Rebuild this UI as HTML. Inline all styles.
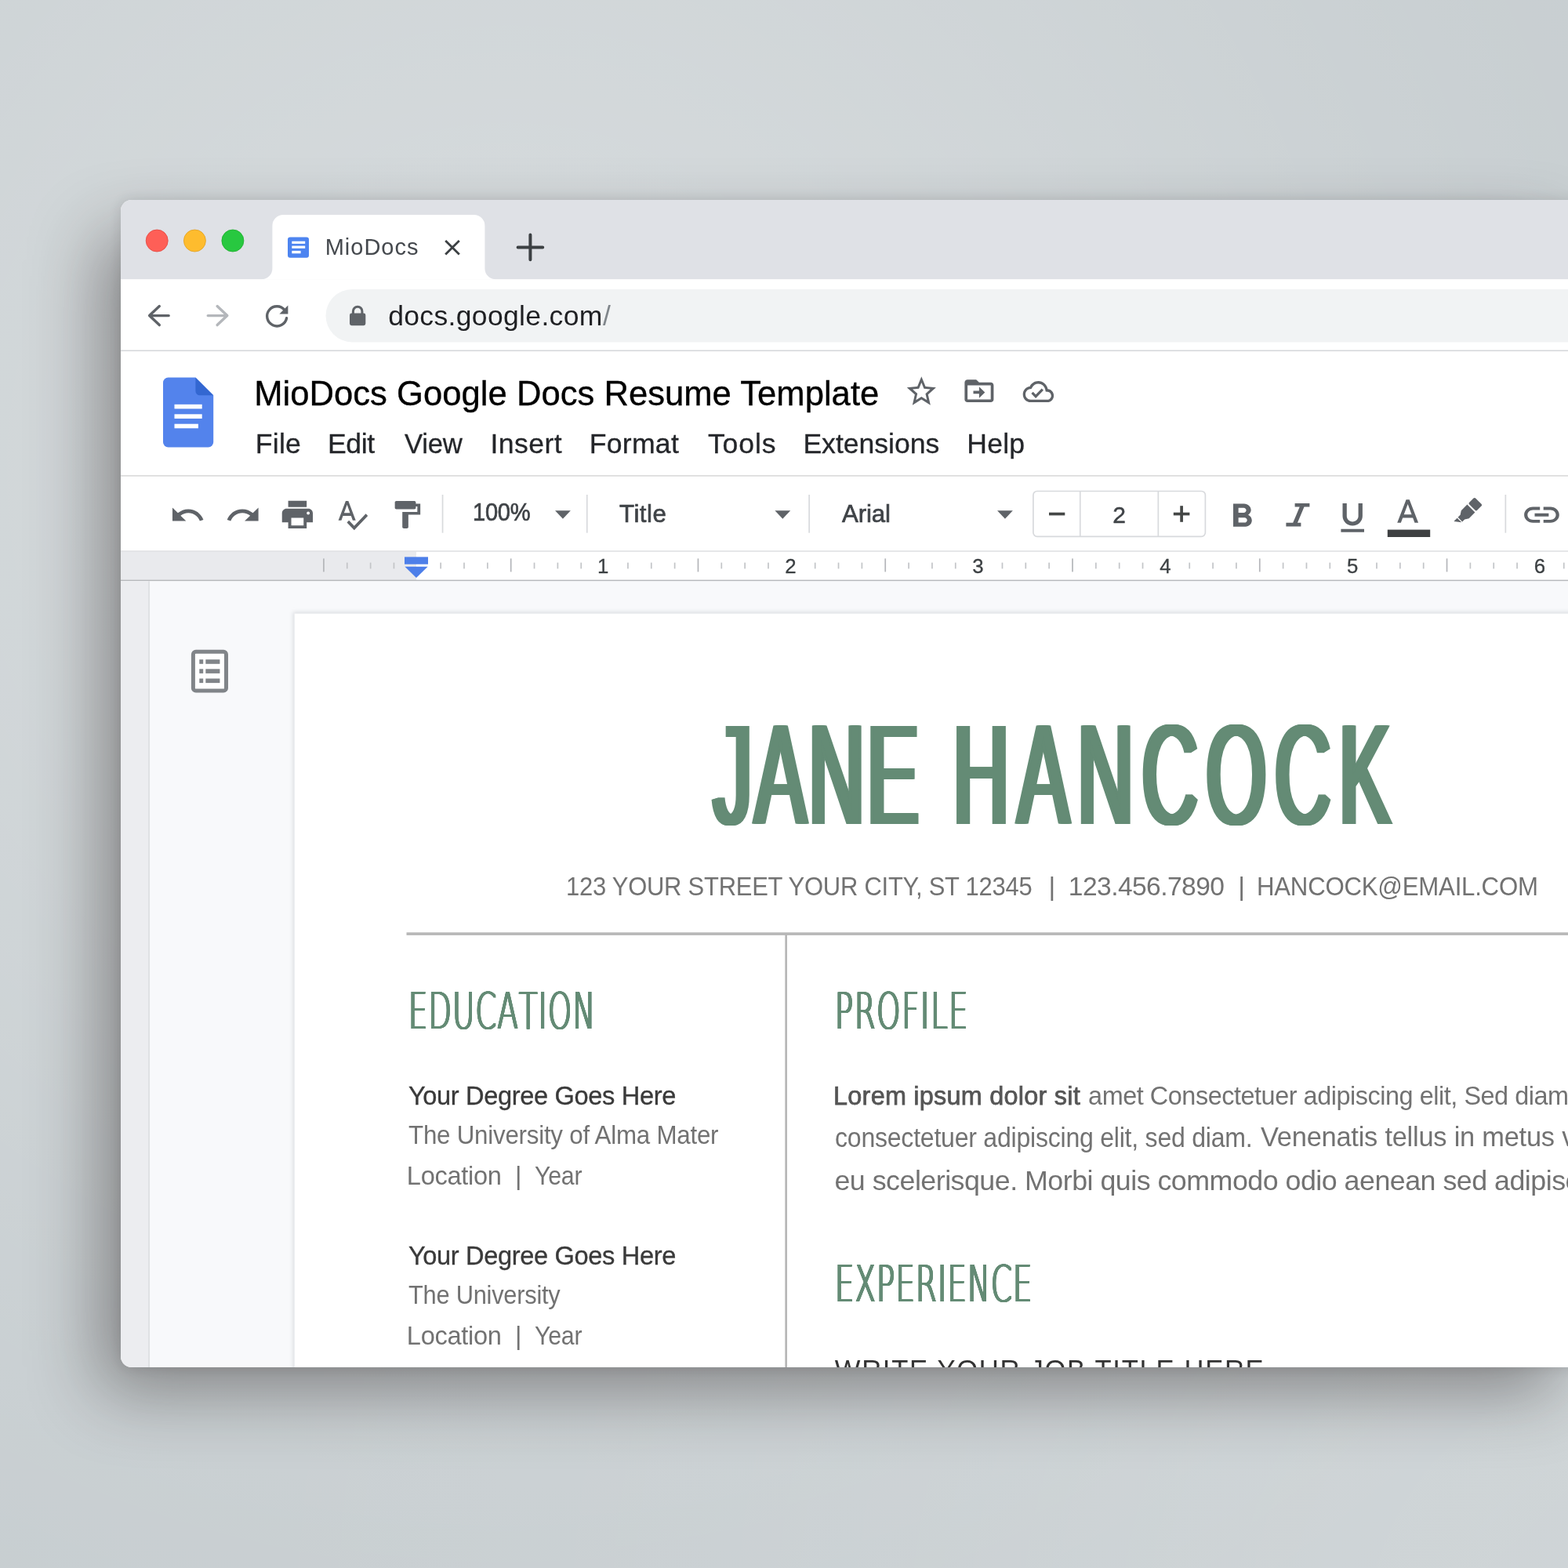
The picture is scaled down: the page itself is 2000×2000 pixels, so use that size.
<!DOCTYPE html>
<html lang="en">
<head>
<meta charset="utf-8">
<title>MioDocs Google Docs Resume Template</title>
<style>
html,body{margin:0;padding:0;}
body{width:2000px;height:2000px;overflow:hidden;position:relative;
  background:
    radial-gradient(circle 2700px at 650px 600px, rgba(255,255,255,0.2950) 0.00%, rgba(255,255,255,0.2859) 8.33%, rgba(255,255,255,0.2603) 16.67%, rgba(255,255,255,0.2227) 25.00%, rgba(255,255,255,0.1789) 33.33%, rgba(255,255,255,0.1351) 41.67%, rgba(255,255,255,0.0958) 50.00%, rgba(255,255,255,0.0638) 58.33%, rgba(255,255,255,0.0399) 66.67%, rgba(255,255,255,0.0235) 75.00%, rgba(255,255,255,0.0130) 83.33%, rgba(255,255,255,0.0067) 91.67%, rgba(255,255,255,0) 100%),
    radial-gradient(circle 2100px at 2100px 2100px, rgba(255,255,255,0.1650) 0.00%, rgba(255,255,255,0.1599) 8.33%, rgba(255,255,255,0.1456) 16.67%, rgba(255,255,255,0.1245) 25.00%, rgba(255,255,255,0.1001) 33.33%, rgba(255,255,255,0.0755) 41.67%, rgba(255,255,255,0.0536) 50.00%, rgba(255,255,255,0.0357) 58.33%, rgba(255,255,255,0.0223) 66.67%, rgba(255,255,255,0.0131) 75.00%, rgba(255,255,255,0.0072) 83.33%, rgba(255,255,255,0.0038) 91.67%, rgba(255,255,255,0) 100%),
    rgb(196,203,206);
  font-family:"Liberation Sans", sans-serif;}
.win{position:absolute;left:154px;top:255px;width:1872px;height:1489px;border-radius:14px;overflow:hidden;background:#fff;
  box-shadow:-34px 38px 90px -8px rgba(33,27,25,0.425), 0 0 16px rgba(33,27,25,0.12);}
.in{position:absolute;left:-154px;top:-255px;width:2100px;height:2000px;will-change:transform;}
.in svg{position:absolute;left:0;top:0;}
.ln{margin:0;padding:0;}
.t{margin:0;padding:0;position:absolute;white-space:nowrap;line-height:1;font-family:"Liberation Sans", sans-serif;}
.hd{font-kerning:none;margin:0;padding:0;position:absolute;left:0;top:0;width:0;height:0;font-family:"Liberation Sans", sans-serif;font-weight:400;color:#648b75;line-height:1;white-space:nowrap;}
.hd span{position:absolute;transform-origin:0 0;display:block;}
</style>
</head>
<body>
<div class="win">
<div class="in">
<svg width="2100" height="2000" viewBox="0 0 2100 2000">
<rect x="154" y="255" width="1900" height="101.4" fill="#dfe1e6"/>
<path d="M333.4,356.4 A14,14 0 0 0 347.4,342.4 V288 A14,14 0 0 1 361.4,274 H604.4 A14,14 0 0 1 618.4,288 V342.4 A14,14 0 0 0 632.4,356.4 Z" fill="#fff"/>
<circle cx="200.2" cy="307" r="14" fill="#fe5f57" stroke="#e2463f" stroke-width="0.8"/>
<circle cx="248.4" cy="307" r="14" fill="#febc2e" stroke="#dfa023" stroke-width="0.8"/>
<circle cx="296.9" cy="307" r="14" fill="#28c840" stroke="#1dad2b" stroke-width="0.8"/>
<rect x="367" y="302.4" width="27" height="26.4" rx="3" fill="#4d84f0"/>
<rect x="372.3" y="307.7" width="16.9" height="3.2" fill="#fff"/><rect x="372.3" y="313.6" width="16.9" height="3.2" fill="#fff"/><rect x="372.3" y="319.9" width="11.3" height="3.4" fill="#fff"/>
<path d="M568.2,307 L585.8,324.6 M585.8,307 L568.2,324.6" stroke="#3c4043" stroke-width="2.8" fill="none"/>
<path d="M660.6,315.4 H692.2 M676.4,299.6 V331.2" stroke="#3c4043" stroke-width="4" stroke-linecap="round" fill="none"/>
<rect x="154" y="356.4" width="1900" height="91" fill="#fff"/>
<rect x="415.5" y="369" width="1700" height="67.4" rx="33.7" fill="#f1f3f4"/>
<rect x="154" y="446.5" width="1900" height="1.7" fill="#d5d7da"/>
<path d="M215.2,402.6 H191 M203.3,390.6 L190.6,402.6 L203.3,414.6" stroke="#5f6368" stroke-width="3.4" stroke-linecap="round" stroke-linejoin="round" fill="none"/>
<path d="M265.2,402.6 H289.6 M277.1,390.6 L289.8,402.6 L277.1,414.6" stroke="#b4b7bb" stroke-width="3.4" stroke-linecap="round" stroke-linejoin="round" fill="none"/>
<path d="M363.2,395.6 A12.6,12.6 0 1 0 365.6,405.6" stroke="#5f6368" stroke-width="3.4" stroke-linecap="round" fill="none"/>
<path d="M367.4,389.4 V400.4 H356.4 Z" fill="#5f6368"/>
<rect x="446" y="399.6" width="20.3" height="15.6" rx="2.4" fill="#5f6368"/>
<path d="M450.4,400.5 V397 A5.75,5.75 0 0 1 461.9,397 V400.5" stroke="#5f6368" stroke-width="3" fill="none"/>
<rect x="154" y="448.2" width="1900" height="158.4" fill="#fff"/>
<rect x="154" y="606.1" width="1900" height="1.7" fill="#d9d9d9"/>
<path d="M214.5,481.5 H249.4 L272.2,504.3 V564 A6.5,6.5 0 0 1 265.7,570.5 H214.5 A6.5,6.5 0 0 1 208,564 V488 A6.5,6.5 0 0 1 214.5,481.5 Z" fill="#5383ec"/>
<path d="M249.4,481.5 L272.2,504.3 H255 A5.6,5.6 0 0 1 249.4,498.7 Z" fill="#3367d1"/>
<rect x="222.5" y="515.8" width="35.2" height="5.6" fill="#fff"/><rect x="222.5" y="528.3" width="35.2" height="5.6" fill="#fff"/><rect x="222.5" y="540.7" width="30.4" height="5.6" fill="#fff"/>
<path transform="translate(1153.00 476.40) scale(1.8600 1.9200)" fill="#5f6368" d="M22 9.24l-7.19-.62L12 2 9.19 8.63 2 9.24l5.46 4.73L5.82 21 12 17.27 18.18 21l-1.63-7.03L22 9.24zM12 15.4l-3.76 2.27 1-4.28-3.32-2.88 4.38-.38L12 6.1l1.71 4.04 4.38.38-3.32 2.88 1 4.28L12 15.4z" />
<path transform="translate(1226.70 476.90) scale(1.8500 1.8100)" fill="#5f6368" d="M20 6h-8l-2-2H4c-1.1 0-2 .9-2 2v12c0 1.1.9 2 2 2h16c1.1 0 2-.9 2-2V8c0-1.1-.9-2-2-2zm0 12H4V8h16v10zm-8-1l4-4-4-4v3H8v2h4v3z" />
<path transform="translate(1304.70 479.30) scale(1.6420 1.6900)" fill="#5f6368" d="M19.35 10.04C18.67 6.59 15.64 4 12 4 9.11 4 6.6 5.64 5.35 8.04 2.34 8.36 0 10.91 0 14c0 3.31 2.69 6 6 6h13c2.76 0 5-2.24 5-5 0-2.64-2.05-4.78-4.65-4.96zM19 18H6c-2.21 0-4-1.79-4-4 0-2.05 1.53-3.76 3.56-3.97l1.07-.11.5-.95C8.08 7.14 9.94 6 12 6c2.62 0 4.88 1.86 5.39 4.43l.3 1.5 1.53.11c1.56.1 2.78 1.41 2.78 2.96 0 1.65-1.35 3-3 3zm-9-3.82l-2.09-2.09L6.5 13.5 10 17l6.01-6.01-1.41-1.41z" />
<rect x="154" y="607.8" width="1900" height="95" fill="#fff"/>
<rect x="563.7" y="631" width="1.7" height="48.7" fill="#d8dadd"/>
<rect x="747.9000000000001" y="631" width="1.7" height="48.7" fill="#d8dadd"/>
<rect x="1031.3" y="631" width="1.7" height="48.7" fill="#d8dadd"/>
<rect x="1919.5" y="631" width="1.7" height="48.7" fill="#d8dadd"/>
<path transform="translate(216.10 634.20) scale(1.9300 1.9000)" fill="#5f6368" d="M12.5 8c-2.65 0-5.05.99-6.9 2.6L2 7v9h9l-3.62-3.62c1.39-1.16 3.16-1.88 5.12-1.88 3.54 0 6.55 2.31 7.6 5.5l2.37-.78C21.08 11.03 17.15 8 12.5 8z" />
<path transform="translate(286.70 634.20) scale(1.9500 1.9000)" fill="#5f6368" d="M18.4 10.6C16.55 8.99 14.15 8 11.5 8c-4.65 0-8.58 3.03-9.96 7.22L3.9 16c1.05-3.19 4.05-5.5 7.6-5.5 1.95 0 3.73.72 5.12 1.88L13 16h9V7l-3.6 3.6z" />
<path transform="translate(355.80 633.00) scale(1.9650 1.9560)" fill="#5f6368" d="M19 8H5c-1.66 0-3 1.34-3 3v6h4v4h12v-4h4v-6c0-1.66-1.34-3-3-3zm-3 11H8v-5h8v5zm3-7c-.55 0-1-.45-1-1s.45-1 1-1 1 .45 1 1-.45 1-1 1zm-1-9H6v4h12V3z" />
<path transform="translate(427.10 633.20) scale(1.8300 1.9100)" fill="#5f6368" d="M12.45 16h2.09L9.43 3H7.57L2.46 16h2.09l1.12-3h5.64l1.14 3zm-6.02-5L8.5 5.48 10.57 11H6.43zm15.16.59l-8.09 8.09L9.83 16l-1.41 1.41 5.09 5.09L23 13l-1.41-1.41z" />
<path transform="translate(496.00 635.40) scale(1.9120 1.7550)" fill="#5f6368" d="M18 4V3c0-.55-.45-1-1-1H5c-.55 0-1 .45-1 1v4c0 .55.45 1 1 1h12c.55 0 1-.45 1-1V6h1v4H9v11c0 .55.45 1 1 1h2c.55 0 1-.45 1-1v-9h8V4h-3z" />
<path d="M708.0500000000001,651.3 H727.85 L717.95,661.8 Z" fill="#5f6368"/>
<path d="M988.4,651.3 H1008.1999999999999 L998.3,661.8 Z" fill="#5f6368"/>
<path d="M1272.05,651.3 H1291.8500000000001 L1281.95,661.8 Z" fill="#5f6368"/>
<rect x="1317.9" y="626.5" width="219.5" height="57.8" rx="5" fill="#fff" stroke="#d8dadd" stroke-width="1.7"/>
<rect x="1376.9" y="626.5" width="1.7" height="57.8" fill="#d8dadd"/><rect x="1476.5" y="626.5" width="1.7" height="57.8" fill="#d8dadd"/>
<rect x="1338" y="653.7" width="20.3" height="3.7" fill="#444746"/>
<rect x="1496.8" y="653.7" width="20.6" height="3.7" fill="#444746"/><rect x="1505.25" y="645.2" width="3.7" height="20.6" fill="#444746"/>
<path transform="translate(1557.50 634.00) scale(2.2140 2.1000)" fill="#5f6368" d="M15.6 10.79c.97-.67 1.65-1.77 1.65-2.79 0-2.26-1.75-4-4-4H7v14h7.04c2.09 0 3.71-1.7 3.71-3.79 0-1.52-.86-2.82-2.15-3.42zM10 6.5h3c.83 0 1.5.67 1.5 1.5s-.67 1.5-1.5 1.5h-3v-3zm3.5 9H10v-3h3.5c.83 0 1.5.67 1.5 1.5s-.67 1.5-1.5 1.5z" />
<path d="M1651.6,642 H1670.4 V646.6 H1663.5 L1655,666.8 H1659.4 V671.4 H1640.4 V666.8 H1649.2 L1657.7,646.6 H1651.6 Z" fill="#5f6368"/>
<path transform="translate(1699.83 635.88) scale(2.1140 2.0400)" fill="#5f6368" d="M12 17c3.31 0 6-2.69 6-6V3h-2.5v8c0 1.93-1.57 3.5-3.5 3.5S8.5 12.93 8.5 11V3H6v8c0 3.31 2.69 6 6 6zm-7 2v2h14v-2H5z" />
<path transform="translate(1770.82 631.00) scale(2.0700 2.1000)" fill="#5f6368" d="M11 3L5.5 17h2.25l1.12-3h6.25l1.12 3h2.25L13 3h-2zm-1.38 9L12 5.67 14.38 12H9.62z" />
<rect x="1769.8" y="675.6" width="54.4" height="9.4" fill="#3e4042"/>
<g transform="translate(1872.4 652.6) rotate(45) scale(0.86)" fill="#5f6368"><rect x="-8.2" y="-22" width="16.4" height="13" rx="2.2"/><path d="M-8.2,-6.6 H8.2 V6 L4.6,11.5 V16.5 H-4.6 V11.5 L-8.2,6 Z"/><path d="M-4.6,18 H4.6 L-4.6,25 Z"/></g>
<path transform="translate(1939.63 632.53) scale(2.2350 2.0100)" fill="#5f6368" d="M3.9 12c0-1.71 1.39-3.1 3.1-3.1h4V7H7c-2.76 0-5 2.24-5 5s2.24 5 5 5h4v-1.9H7c-1.71 0-3.1-1.39-3.1-3.1zM8 13h8v-2H8v2zm9-6h-4v1.9h4c1.71 0 3.1 1.39 3.1 3.1s-1.39 3.1-3.1 3.1h-4V17h4c2.76 0 5-2.24 5-5s-2.24-5-5-5z" />
<rect x="154" y="703" width="1900" height="38" fill="#fff"/>
<rect x="154" y="703" width="377" height="38" fill="#e9eaed"/>
<rect x="154" y="702.2" width="1900" height="1.7" fill="#e2e3e5"/>
<rect x="154" y="739.6" width="1900" height="1.7" fill="#b7b9bc"/>
<rect x="412.06" y="712.4" width="1.7" height="17" fill="#b4b6ba"/>
<rect x="441.91" y="717.6" width="1.7" height="7.8" fill="#c3c5c8"/>
<rect x="471.76" y="717.6" width="1.7" height="7.8" fill="#c3c5c8"/>
<rect x="501.60" y="717.6" width="1.7" height="7.8" fill="#c3c5c8"/>
<rect x="561.30" y="717.6" width="1.7" height="7.8" fill="#c3c5c8"/>
<rect x="591.14" y="717.6" width="1.7" height="7.8" fill="#c3c5c8"/>
<rect x="620.99" y="717.6" width="1.7" height="7.8" fill="#c3c5c8"/>
<rect x="650.83" y="712.4" width="1.7" height="17" fill="#b4b6ba"/>
<rect x="680.68" y="717.6" width="1.7" height="7.8" fill="#c3c5c8"/>
<rect x="710.53" y="717.6" width="1.7" height="7.8" fill="#c3c5c8"/>
<rect x="740.37" y="717.6" width="1.7" height="7.8" fill="#c3c5c8"/>
<rect x="800.07" y="717.6" width="1.7" height="7.8" fill="#c3c5c8"/>
<rect x="829.91" y="717.6" width="1.7" height="7.8" fill="#c3c5c8"/>
<rect x="859.76" y="717.6" width="1.7" height="7.8" fill="#c3c5c8"/>
<rect x="889.60" y="712.4" width="1.7" height="17" fill="#b4b6ba"/>
<rect x="919.45" y="717.6" width="1.7" height="7.8" fill="#c3c5c8"/>
<rect x="949.30" y="717.6" width="1.7" height="7.8" fill="#c3c5c8"/>
<rect x="979.14" y="717.6" width="1.7" height="7.8" fill="#c3c5c8"/>
<rect x="1038.84" y="717.6" width="1.7" height="7.8" fill="#c3c5c8"/>
<rect x="1068.68" y="717.6" width="1.7" height="7.8" fill="#c3c5c8"/>
<rect x="1098.53" y="717.6" width="1.7" height="7.8" fill="#c3c5c8"/>
<rect x="1128.38" y="712.4" width="1.7" height="17" fill="#b4b6ba"/>
<rect x="1158.22" y="717.6" width="1.7" height="7.8" fill="#c3c5c8"/>
<rect x="1188.07" y="717.6" width="1.7" height="7.8" fill="#c3c5c8"/>
<rect x="1217.91" y="717.6" width="1.7" height="7.8" fill="#c3c5c8"/>
<rect x="1277.61" y="717.6" width="1.7" height="7.8" fill="#c3c5c8"/>
<rect x="1307.45" y="717.6" width="1.7" height="7.8" fill="#c3c5c8"/>
<rect x="1337.30" y="717.6" width="1.7" height="7.8" fill="#c3c5c8"/>
<rect x="1367.14" y="712.4" width="1.7" height="17" fill="#b4b6ba"/>
<rect x="1396.99" y="717.6" width="1.7" height="7.8" fill="#c3c5c8"/>
<rect x="1426.84" y="717.6" width="1.7" height="7.8" fill="#c3c5c8"/>
<rect x="1456.68" y="717.6" width="1.7" height="7.8" fill="#c3c5c8"/>
<rect x="1516.38" y="717.6" width="1.7" height="7.8" fill="#c3c5c8"/>
<rect x="1546.22" y="717.6" width="1.7" height="7.8" fill="#c3c5c8"/>
<rect x="1576.07" y="717.6" width="1.7" height="7.8" fill="#c3c5c8"/>
<rect x="1605.92" y="712.4" width="1.7" height="17" fill="#b4b6ba"/>
<rect x="1635.76" y="717.6" width="1.7" height="7.8" fill="#c3c5c8"/>
<rect x="1665.61" y="717.6" width="1.7" height="7.8" fill="#c3c5c8"/>
<rect x="1695.45" y="717.6" width="1.7" height="7.8" fill="#c3c5c8"/>
<rect x="1755.15" y="717.6" width="1.7" height="7.8" fill="#c3c5c8"/>
<rect x="1784.99" y="717.6" width="1.7" height="7.8" fill="#c3c5c8"/>
<rect x="1814.84" y="717.6" width="1.7" height="7.8" fill="#c3c5c8"/>
<rect x="1844.69" y="712.4" width="1.7" height="17" fill="#b4b6ba"/>
<rect x="1874.53" y="717.6" width="1.7" height="7.8" fill="#c3c5c8"/>
<rect x="1904.38" y="717.6" width="1.7" height="7.8" fill="#c3c5c8"/>
<rect x="1934.22" y="717.6" width="1.7" height="7.8" fill="#c3c5c8"/>
<rect x="1993.92" y="717.6" width="1.7" height="7.8" fill="#c3c5c8"/>
<rect x="516" y="710.4" width="30" height="9.3" fill="#4d7fe9"/><path d="M516.4,722.8 H545.6 L531,737 Z" fill="#4d7fe9"/>
<rect x="154" y="741.3" width="1900" height="1010" fill="#f8f9fb"/>
<rect x="154" y="741.3" width="36" height="1010" fill="#ecedf0"/>
<rect x="189.3" y="741.3" width="1.6" height="1010" fill="#dcdde0"/>
<defs><filter id="pb" x="-5%" y="-5%" width="110%" height="110%"><feGaussianBlur stdDeviation="2.6"/></filter></defs>
<rect x="373.6" y="780.6" width="1700" height="1000" fill="#dcdee2" filter="url(#pb)"/>
<rect x="375.6" y="782.6" width="1700" height="1000" fill="#fff"/>
<rect x="246.4" y="831.3" width="42.1" height="49.8" rx="3.4" fill="#fff" stroke="#818589" stroke-width="5"/>
<rect x="254.3" y="841.2" width="4.9" height="5.6" fill="#818589"/><rect x="262.3" y="841.2" width="18.1" height="5.6" fill="#818589"/>
<rect x="254.3" y="853.3000000000001" width="4.9" height="5.6" fill="#818589"/><rect x="262.3" y="853.3000000000001" width="18.1" height="5.6" fill="#818589"/>
<rect x="254.3" y="865.5" width="4.9" height="5.6" fill="#818589"/><rect x="262.3" y="865.5" width="18.1" height="5.6" fill="#818589"/>
<rect x="518.5" y="1189.3" width="1540" height="3.6" fill="#b7b7b7"/>
<rect x="1001.3" y="1191" width="2.7" height="560" fill="#b7b7b7"/>
</svg>
<div class="t" style="left:414.73px;top:301.45px;font-size:29px;color:#45494e;letter-spacing:0.979px;">MioDocs</div>
<div class="ln"><span class="t" style="left:495.19px;top:386.25px;font-size:35.5px;color:#1f2023;letter-spacing:0.340px;">docs.google.com</span> <span class="t" style="left:768.96px;top:386.25px;font-size:35.5px;color:#80868b;">/</span></div>
<div class="t" style="left:324.19px;top:480.79px;font-size:43.6px;color:#000;letter-spacing:0.022px;-webkit-text-stroke:0.35px #000;">MioDocs Google Docs Resume Template</div>
<div class="ln"><span class="t" style="left:325.82px;top:548.86px;font-size:35.6px;color:#24262a;letter-spacing:0.254px;-webkit-text-stroke:0.3px #24262a;">File</span> <span class="t" style="left:418.02px;top:548.86px;font-size:35.6px;color:#24262a;letter-spacing:-0.428px;-webkit-text-stroke:0.3px #24262a;">Edit</span> <span class="t" style="left:515.70px;top:548.86px;font-size:35.6px;color:#24262a;letter-spacing:-0.250px;transform:scaleX(0.9750);transform-origin:0 0;-webkit-text-stroke:0.3px #24262a;">View</span> <span class="t" style="left:625.52px;top:548.86px;font-size:35.6px;color:#24262a;letter-spacing:0.425px;-webkit-text-stroke:0.3px #24262a;">Insert</span> <span class="t" style="left:751.82px;top:548.86px;font-size:35.6px;color:#24262a;letter-spacing:0.263px;-webkit-text-stroke:0.3px #24262a;">Format</span> <span class="t" style="left:902.94px;top:548.86px;font-size:35.6px;color:#24262a;letter-spacing:0.865px;-webkit-text-stroke:0.3px #24262a;">Tools</span> <span class="t" style="left:1024.42px;top:548.86px;font-size:35.6px;color:#24262a;letter-spacing:-0.016px;-webkit-text-stroke:0.3px #24262a;">Extensions</span> <span class="t" style="left:1233.32px;top:548.86px;font-size:35.6px;color:#24262a;letter-spacing:0.203px;-webkit-text-stroke:0.3px #24262a;">Help</span></div>
<div class="t" style="left:602.78px;top:638.49px;font-size:31.2px;color:#3f4347;letter-spacing:-0.250px;transform:scaleX(0.9321);transform-origin:0 0;-webkit-text-stroke:0.7px #3f4347;">100%</div>
<div class="t" style="left:790.01px;top:640.49px;font-size:31.2px;color:#3f4347;letter-spacing:0.492px;-webkit-text-stroke:0.7px #3f4347;">Title</div>
<div class="t" style="left:1073.90px;top:640.49px;font-size:31.2px;color:#3f4347;letter-spacing:-0.065px;-webkit-text-stroke:0.7px #3f4347;">Arial</div>
<div class="t" style="left:1419.36px;top:642.01px;font-size:30px;color:#3f4347;-webkit-text-stroke:0.5px #3f4347;">2</div>
<div class="ln"><span class="t" style="left:762.04px;top:710.16px;font-size:25.8px;color:#3c4043;-webkit-text-stroke:0.3px #3c4043;">1</span> <span class="t" style="left:1001.14px;top:710.16px;font-size:25.8px;color:#3c4043;-webkit-text-stroke:0.3px #3c4043;">2</span> <span class="t" style="left:1240.25px;top:710.16px;font-size:25.8px;color:#3c4043;-webkit-text-stroke:0.3px #3c4043;">3</span> <span class="t" style="left:1479.15px;top:710.16px;font-size:25.8px;color:#3c4043;-webkit-text-stroke:0.3px #3c4043;">4</span> <span class="t" style="left:1718.05px;top:710.16px;font-size:25.8px;color:#3c4043;-webkit-text-stroke:0.3px #3c4043;">5</span> <span class="t" style="left:1956.74px;top:710.16px;font-size:25.8px;color:#3c4043;-webkit-text-stroke:0.3px #3c4043;">6</span></div>
<p class="ln"><span class="t" style="left:722.16px;top:1113.66px;font-size:33.6px;color:#727272;letter-spacing:-0.250px;transform:scaleX(0.9216);transform-origin:0 0;">123 YOUR STREET YOUR CITY, ST 12345</span> <span class="t" style="left:1337.60px;top:1113.66px;font-size:33.6px;color:#727272;">|</span> <span class="t" style="left:1362.80px;top:1113.66px;font-size:33.6px;color:#727272;letter-spacing:-0.564px;">123.456.7890</span> <span class="t" style="left:1579.20px;top:1113.66px;font-size:33.6px;color:#727272;">|</span> <span class="t" style="left:1602.76px;top:1113.66px;font-size:33.6px;color:#727272;letter-spacing:-0.250px;transform:scaleX(0.9288);transform-origin:0 0;">HANCOCK@EMAIL.COM</span></p>
<p class="t" style="left:520.89px;top:1381.90px;font-size:32.6px;color:#3a3a3a;letter-spacing:-0.345px;-webkit-text-stroke:0.35px #3a3a3a;">Your Degree Goes Here</p>
<p class="t" style="left:520.91px;top:1432.20px;font-size:32.6px;color:#727272;letter-spacing:-0.250px;transform:scaleX(0.9613);transform-origin:0 0;">The University of Alma Mater</p>
<p class="ln"><span class="t" style="left:518.85px;top:1483.70px;font-size:32.6px;color:#727272;letter-spacing:-0.311px;">Location</span> <span class="t" style="left:656.97px;top:1483.70px;font-size:32.6px;color:#727272;">|</span> <span class="t" style="left:682.43px;top:1483.70px;font-size:32.6px;color:#727272;letter-spacing:-0.250px;transform:scaleX(0.9310);transform-origin:0 0;">Year</span></p>
<p class="t" style="left:520.89px;top:1586.00px;font-size:32.6px;color:#3a3a3a;letter-spacing:-0.345px;-webkit-text-stroke:0.35px #3a3a3a;">Your Degree Goes Here</p>
<p class="t" style="left:520.92px;top:1636.30px;font-size:32.6px;color:#727272;letter-spacing:-0.250px;transform:scaleX(0.9454);transform-origin:0 0;">The University</p>
<p class="ln"><span class="t" style="left:518.85px;top:1687.80px;font-size:32.6px;color:#727272;letter-spacing:-0.311px;">Location</span> <span class="t" style="left:656.97px;top:1687.80px;font-size:32.6px;color:#727272;">|</span> <span class="t" style="left:682.43px;top:1687.80px;font-size:32.6px;color:#727272;letter-spacing:-0.250px;transform:scaleX(0.9310);transform-origin:0 0;">Year</span></p>
<p class="ln"><span class="t" style="left:1063.07px;top:1381.67px;font-size:32.4px;color:#555;letter-spacing:0.250px;-webkit-text-stroke:0.75px #555;">Lorem ipsum dolor sit</span> <span class="t" style="left:1388.09px;top:1381.67px;font-size:32.4px;color:#727272;letter-spacing:-0.451px;">amet Consectetuer adipiscing elit, Sed diam</span></p>
<p class="ln"><span class="t" style="left:1064.60px;top:1434.15px;font-size:34.2px;color:#727272;letter-spacing:-0.250px;transform:scaleX(0.9375);transform-origin:0 0;">consectetuer adipiscing elit, sed diam.</span> <span class="t" style="left:1608.00px;top:1432.80px;font-size:35.8px;color:#727272;letter-spacing:-0.250px;transform:scaleX(0.9617);transform-origin:0 0;">Venenatis tellus in metus vitae</span></p>
<p class="t" style="left:1064.48px;top:1488.70px;font-size:35.8px;color:#727272;letter-spacing:-0.510px;">eu scelerisque. Morbi quis commodo odio aenean sed adipiscing</p>
<p class="t" style="left:1064.80px;top:1729.91px;font-size:34.6px;color:#333;letter-spacing:1.706px;">WRITE YOUR JOB TITLE HERE</p>
<h1 class="hd" style="font-size:181.69px;text-shadow:-7.41px 0.00px 0 #648b75,-5.56px 0.00px 0 #648b75,-3.70px 0.00px 0 #648b75,-1.85px 0.00px 0 #648b75,1.85px 0.00px 0 #648b75,3.70px 0.00px 0 #648b75,5.56px 0.00px 0 #648b75,7.41px 0.00px 0 #648b75;"><span style="transform:scaleX(0.54);left:909.67px;top:898.30px;letter-spacing:6.71px;">JANE</span> <span style="transform:scaleX(0.54);left:1215.84px;top:898.30px;letter-spacing:20.68px;">HANCOCK</span></h1>
<h2 class="hd" style="font-family:'DejaVu Sans', 'Liberation Sans', sans-serif;font-weight:200;font-size:63.79px;text-shadow:-1.67px -0.45px 0 #648b75,-1.67px 0.00px 0 #648b75,-1.67px 0.45px 0 #648b75,0.00px -0.45px 0 #648b75,0.00px 0.45px 0 #648b75,1.67px -0.45px 0 #648b75,1.67px 0.00px 0 #648b75,1.67px 0.45px 0 #648b75;"><span style="transform:scaleX(0.6);left:520.91px;top:1258.91px;letter-spacing:2.11px;">EDUCATION</span></h2>
<h2 class="hd" style="font-family:'DejaVu Sans', 'Liberation Sans', sans-serif;font-weight:200;font-size:63.79px;text-shadow:-1.67px -0.45px 0 #648b75,-1.67px 0.00px 0 #648b75,-1.67px 0.45px 0 #648b75,0.00px -0.45px 0 #648b75,0.00px 0.45px 0 #648b75,1.67px -0.45px 0 #648b75,1.67px 0.00px 0 #648b75,1.67px 0.45px 0 #648b75;"><span style="transform:scaleX(0.6);left:1065.21px;top:1258.91px;letter-spacing:3.04px;">PROFILE</span></h2>
<h2 class="hd" style="font-family:'DejaVu Sans', 'Liberation Sans', sans-serif;font-weight:200;font-size:64.20px;text-shadow:-1.67px -0.45px 0 #648b75,-1.67px 0.00px 0 #648b75,-1.67px 0.45px 0 #648b75,0.00px -0.45px 0 #648b75,0.00px 0.45px 0 #648b75,1.67px -0.45px 0 #648b75,1.67px 0.00px 0 #648b75,1.67px 0.45px 0 #648b75;"><span style="transform:scaleX(0.6);left:1064.59px;top:1606.16px;letter-spacing:1.98px;">EXPERIENCE</span></h2>
</div>
</div>
</body>
</html>
